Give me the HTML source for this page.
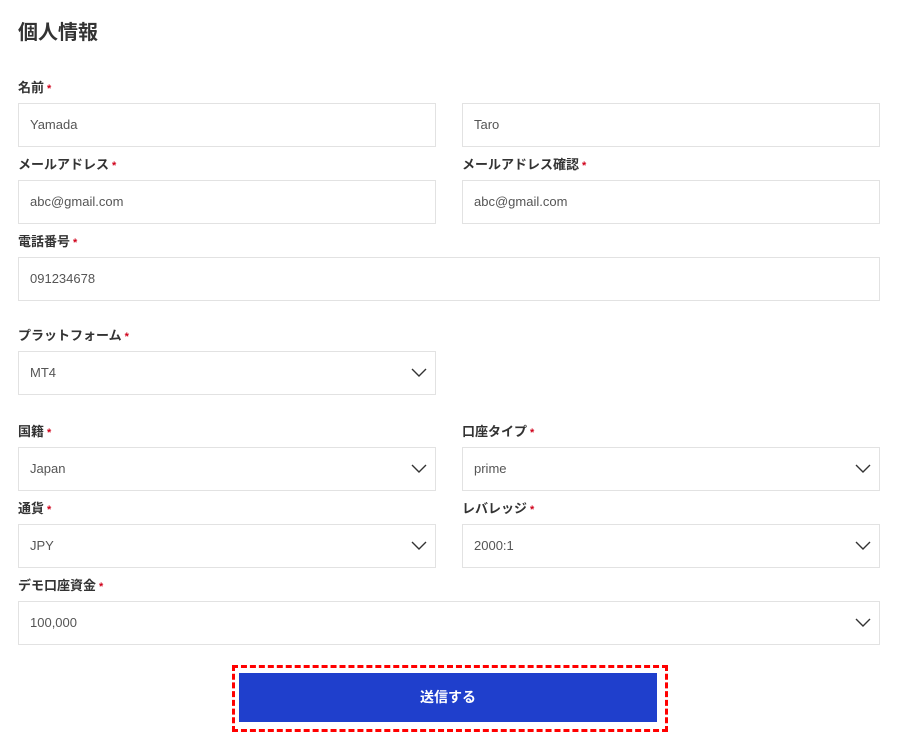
<!DOCTYPE html>
<html><head><meta charset="utf-8"><style>
body{margin:0;width:900px;height:746px;background:#fff;font-family:"Liberation Sans","Noto Sans CJK JP",sans-serif;position:relative;overflow:hidden}
h1{position:absolute;left:18px;top:19px;margin:0;font-size:20px;font-weight:700;color:#333;line-height:28px}
.l{position:absolute;font-size:13px;font-weight:700;color:#333;line-height:16px}
.l b{color:#d0021b;font-size:11px;margin-left:3px}
.i{position:absolute;height:42px;border:1px solid #e2e2e2;box-sizing:content-box;font-size:13px;color:#555;line-height:42px;padding-left:11px}
.i svg{position:absolute;right:8px;top:16px}
.w{width:405px}.f{width:849px}
.btn{position:absolute;left:239px;top:673px;width:418px;height:49px;background:#1f3fcc;color:#fff;font-weight:700;font-size:14px;text-align:center;line-height:49px}
.dash{position:absolute;left:232px;top:665px;width:430px;height:61px;border:3px dashed #f00}
</style></head><body>
<h1>個人情報</h1>
<div class="l" style="left:18px;top:80px">名前<b>*</b></div>
<div class="i w" style="left:18px;top:103px">Yamada</div>
<div class="i w" style="left:462px;top:103px">Taro</div>
<div class="l" style="left:18px;top:157px">メールアドレス<b>*</b></div>
<div class="l" style="left:462px;top:157px">メールアドレス確認<b>*</b></div>
<div class="i w" style="left:18px;top:180px">abc@gmail.com</div>
<div class="i w" style="left:462px;top:180px">abc@gmail.com</div>
<div class="l" style="left:18px;top:234px">電話番号<b>*</b></div>
<div class="i f" style="left:18px;top:257px">091234678</div>
<div class="l" style="left:18px;top:328px">プラットフォーム<b>*</b></div>
<div class="i w" style="left:18px;top:351px">MT4<svg width="16" height="10"><path d="M1 1L8 8L15 1" fill="none" stroke="#333" stroke-width="1.4"/></svg></div>
<div class="l" style="left:18px;top:424px">国籍<b>*</b></div>
<div class="l" style="left:462px;top:424px">口座タイプ<b>*</b></div>
<div class="i w" style="left:18px;top:447px">Japan<svg width="16" height="10"><path d="M1 1L8 8L15 1" fill="none" stroke="#333" stroke-width="1.4"/></svg></div>
<div class="i w" style="left:462px;top:447px">prime<svg width="16" height="10"><path d="M1 1L8 8L15 1" fill="none" stroke="#333" stroke-width="1.4"/></svg></div>
<div class="l" style="left:18px;top:501px">通貨<b>*</b></div>
<div class="l" style="left:462px;top:501px">レバレッジ<b>*</b></div>
<div class="i w" style="left:18px;top:524px">JPY<svg width="16" height="10"><path d="M1 1L8 8L15 1" fill="none" stroke="#333" stroke-width="1.4"/></svg></div>
<div class="i w" style="left:462px;top:524px">2000:1<svg width="16" height="10"><path d="M1 1L8 8L15 1" fill="none" stroke="#333" stroke-width="1.4"/></svg></div>
<div class="l" style="left:18px;top:578px">デモ口座資金<b>*</b></div>
<div class="i f" style="left:18px;top:601px">100,000<svg width="16" height="10"><path d="M1 1L8 8L15 1" fill="none" stroke="#333" stroke-width="1.4"/></svg></div>
<div class="dash"></div>
<div class="btn">送信する</div>
</body></html>
